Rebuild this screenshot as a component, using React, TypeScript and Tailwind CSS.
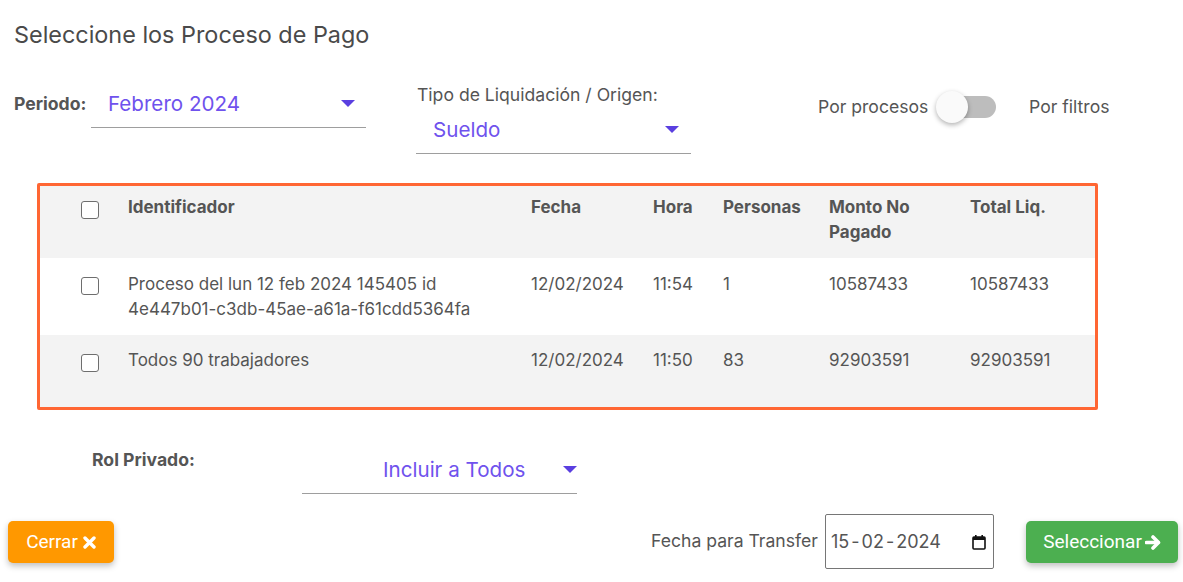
import React from "react";

function Caret() {
  return (
    <svg width="14" height="8" viewBox="0 0 14 8" className="shrink-0">
      <path d="M0 0 L14 0 L7 7 Z" fill="#5a3fe0" />
    </svg>
  );
}

function Select({ value, w, pl, arrowPr }: { value: string; w: string; pl: string; arrowPr: string }) {
  return (
    <div className={`${w} h-[47px] border-b border-[#9e9e9e] flex items-center justify-between ${pl} ${arrowPr}`}>
      <span className="text-[20.6px] text-[#6f52ed] leading-none">{value}</span>
      <Caret />
    </div>
  );
}

function Check() {
  return <div className="w-[18px] h-[18px] rounded-[3px] border-[1.5px] border-[#6e6e6e] bg-white" />;
}

function XIcon() {
  return (
    <svg width="13" height="13" viewBox="0 0 13 13" className="mt-[1px]">
      <path d="M2 2 L11 11 M11 2 L2 11" stroke="white" strokeWidth="3.4" strokeLinecap="round" />
    </svg>
  );
}

function ArrowIcon() {
  return (
    <svg width="16" height="15" viewBox="0 0 16 15" className="mt-[1px]">
      <path d="M1.5 7.5 H13" stroke="white" strokeWidth="3.6" strokeLinecap="round" />
      <path d="M8 2 L13.5 7.5 L8 13" fill="none" stroke="white" strokeWidth="3.6" strokeLinecap="round" strokeLinejoin="round" />
    </svg>
  );
}

const cols = "grid grid-cols-[75px_403px_122px_70px_106px_141px_1fr]";

export default function App() {
  return (
    <div className="w-[1183px] h-[582px] bg-white text-[#555555] overflow-hidden" style={{ fontFamily: "Inter, 'Noto Sans', sans-serif" }}>
      <div className="pt-[22px] pl-[14px] text-[23.4px] leading-[26px] text-[#4a4a4a]">Seleccione los Proceso de Pago</div>

      <div className="flex items-start mt-[33px]">
        <div className="flex items-center ml-[14px]">
          <span className="w-[77px] text-[17.6px] font-bold text-[#555]">Periodo:</span>
          <Select value="Febrero 2024" w="w-[275px]" pl="pl-[17px]" arrowPr="pr-[11px]" />
        </div>
        <div className="ml-[50px] mt-[3px] flex flex-col">
          <span className="pl-[1px] text-[17.6px] leading-[22px] text-[#555]">Tipo de Liquidación / Origen:</span>
          <div className="mt-[1px]">
            <Select value="Sueldo" w="w-[275px]" pl="pl-[17px]" arrowPr="pr-[12px]" />
          </div>
        </div>
        <div className="ml-[127px] mt-[10px] flex items-center h-[32px]">
          <span className="w-[118px] text-[17.6px] text-[#555] whitespace-nowrap">Por procesos</span>
          <div className="relative w-[60px] h-[32px] flex items-center">
            <div className="ml-[6px] w-[54px] h-[22px] rounded-full bg-[#bdbdbd]" />
            <div className="absolute left-0 top-[0px] w-[32px] h-[32px] rounded-full bg-[#fafafa] shadow-[0_2px_5px_rgba(0,0,0,0.3)]" />
          </div>
          <span className="ml-[33px] text-[17.6px] text-[#555]">Por filtros</span>
        </div>
      </div>

      <div className="ml-[37px] mt-[29px] w-[1061px] border-[3px] border-[#ff6633] rounded-[2px] text-[17px]">
        <div className={`${cols} h-[72px] bg-[#f3f3f3] font-bold leading-[25px] pt-[9px]`}>
          <div className="pl-[41px] pt-[6px]"><Check /></div>
          <div className="pl-[13px]">Identificador</div>
          <div className="pl-[13px]">Fecha</div>
          <div className="pl-[13px]">Hora</div>
          <div className="pl-[13px]">Personas</div>
          <div className="pl-[13px]">Monto No<br />Pagado</div>
          <div className="pl-[13px]">Total Liq.</div>
        </div>
        <div className={`${cols} h-[77px] bg-white leading-[25px] pt-[14px]`}>
          <div className="pl-[41px] pt-[5px]"><Check /></div>
          <div className="pl-[13px] whitespace-nowrap">Proceso del lun 12 feb 2024 145405 id<br />4e447b01-c3db-45ae-a61a-f61cdd5364fa</div>
          <div className="pl-[13px]">12/02/2024</div>
          <div className="pl-[13px]">11:54</div>
          <div className="pl-[13px]">1</div>
          <div className="pl-[13px]">10587433</div>
          <div className="pl-[13px]">10587433</div>
        </div>
        <div className={`${cols} h-[72px] bg-[#f3f3f3] leading-[25px] pt-[13px]`}>
          <div className="pl-[41px] pt-[6px]"><Check /></div>
          <div className="pl-[13px]">Todos 90 trabajadores</div>
          <div className="pl-[13px]">12/02/2024</div>
          <div className="pl-[13px]">11:50</div>
          <div className="pl-[13px]">83</div>
          <div className="pl-[13px]">92903591</div>
          <div className="pl-[13px]">92903591</div>
        </div>
      </div>

      <div className="flex items-start mt-[37px]">
        <span className="ml-[92px] mt-[2px] w-[210px] text-[17.6px] leading-[22px] font-bold text-[#555]">Rol Privado:</span>
        <Select value="Incluir a Todos" w="w-[275px]" pl="pl-[81px]" arrowPr="pr-[0px]" />
      </div>

      <div className="flex items-start mt-[20px]">
        <button className="ml-[8px] mt-[7px] w-[106px] h-[42px] rounded-[5px] bg-[#ff9800] text-white text-[19px] flex items-center justify-center gap-[5px] shadow-[0_3px_6px_rgba(0,0,0,0.25)]" style={{ fontFamily: "Roboto, sans-serif" }}>
          Cerrar <XIcon />
        </button>
        <span className="ml-[537px] mt-[15px] w-[174px] text-[17.6px] leading-[24px] text-[#555] whitespace-nowrap">Fecha para Transfer</span>
        <div className="w-[169px] h-[55px] border border-[#767676] rounded-[2px] flex items-center justify-between pl-[5px] pr-[7px] text-[18px] text-[#555]">
          <span className="flex gap-[2px]"><span>15</span><span>-</span><span>02</span><span>-</span><span>2024</span></span>
          <svg width="14" height="16" viewBox="0 0 14 16">
            <rect x="1" y="3" width="12" height="12" rx="1" fill="none" stroke="#111" strokeWidth="1.6" />
            <rect x="1" y="3" width="12" height="3" fill="#111" />
            <rect x="3" y="1" width="1.6" height="3" fill="#111" />
            <rect x="9.4" y="1" width="1.6" height="3" fill="#111" />
          </svg>
        </div>
        <button className="ml-[32px] mt-[7px] w-[152px] h-[42px] rounded-[5px] bg-[#4caf50] text-white text-[19px] flex items-center justify-center gap-[3px] shadow-[0_3px_6px_rgba(0,0,0,0.25)]" style={{ fontFamily: "Roboto, sans-serif" }}>
          Seleccionar <ArrowIcon />
        </button>
      </div>
    </div>
  );
}
